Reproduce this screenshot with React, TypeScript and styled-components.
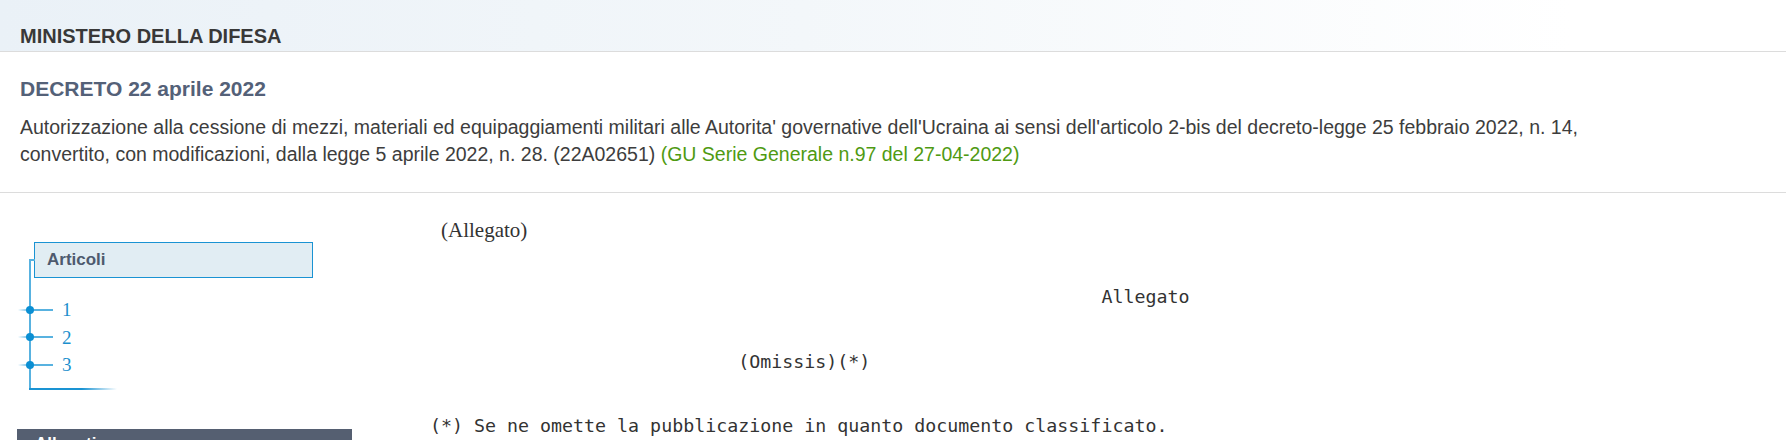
import React from 'react';
import styled, { createGlobalStyle } from 'styled-components';

const GlobalStyle = createGlobalStyle`
  html, body {
    margin: 0;
    padding: 0;
    background: #fff;
  }
  body {
    font-family: "Liberation Sans", Arial, sans-serif;
    color: #333;
  }
`;

const articoli = ['1', '2', '3'];

const pubblicazione = [
  `${' '.repeat(61)}Allegato`,
  '',
  '',
  `${' '.repeat(28)}(Omissis)(*)`,
  '',
  '',
  '(*) Se ne omette la pubblicazione in quanto documento classificato.',
].join('\n');

function App(): JSX.Element {
  return (
    <>
      <GlobalStyle />
      <Page>
        <Emettitore>MINISTERO DELLA DIFESA</Emettitore>
        <Intestazione>
          <Titolo>DECRETO 22 aprile 2022</Titolo>
          <Descrizione>
            Autorizzazione alla cessione di mezzi, materiali ed equipaggiamenti militari alle Autorita'
            governative dell'Ucraina ai sensi dell'articolo 2-bis del decreto-legge 25 febbraio 2022, n. 14,
            convertito, con modificazioni, dalla legge 5 aprile 2022, n. 28. (22A02651){' '}
            <Gazzetta>(GU Serie Generale n.97 del 27-04-2022)</Gazzetta>
          </Descrizione>
        </Intestazione>
        <Corpo>
          <Sidebar>
            <Tree>
              <TreeHead>Articoli</TreeHead>
              <TreeItems>
                {articoli.map((n) => (
                  <TreeItem key={n}>{n}</TreeItem>
                ))}
              </TreeItems>
            </Tree>
            <Pannello>Allegati</Pannello>
          </Sidebar>
          <Testo>
            <Rubrica>(Allegato)</Rubrica>
            <Pre>{pubblicazione}</Pre>
          </Testo>
        </Corpo>
      </Page>
    </>
  );
}

const Page = styled.div`
  width: 100%;
`;

const Emettitore = styled.h1`
  margin: 0;
  padding: 24px 20px 3px;
  font-size: 20px;
  line-height: 24px;
  font-weight: bold;
  color: #383838;
  background: linear-gradient(to right, #eaf1f7 0%, #f3f7fa 45%, #ffffff 88%);
  border-bottom: 1px solid #dcdcdc;
`;

const Intestazione = styled.section`
  padding: 24px 20px 24px;
  border-bottom: 1px solid #dcdcdc;
`;

const Titolo = styled.h2`
  margin: 0;
  font-size: 21px;
  line-height: 26px;
  font-weight: bold;
  color: #546178;
`;

const Descrizione = styled.p`
  margin: 12px 0 0;
  max-width: 1610px;
  font-size: 19.5px;
  line-height: 27px;
  color: #3d3d3d;
`;

const Gazzetta = styled.span`
  color: #4f9a12;
`;

const Corpo = styled.div`
  display: flex;
  align-items: flex-start;
`;

const Sidebar = styled.aside`
  flex: 0 0 335px;
  margin-left: 17px;
  padding-top: 49px;
`;

const blu = '#1a93d3';

const Tree = styled.div`
  position: relative;
  margin-left: 12px;
  padding-bottom: 10px;

  &::before {
    content: '';
    position: absolute;
    left: 0;
    top: 17px;
    bottom: 0;
    width: 4px;
    border-top: 2px solid #58b2e0;
    border-left: 2px solid #58b2e0;
  }

  &::after {
    content: '';
    position: absolute;
    left: 0;
    bottom: -1px;
    width: 88px;
    height: 2px;
    background: linear-gradient(to right, ${blu} 0%, ${blu} 60%, rgba(26, 147, 211, 0) 100%);
  }
`;

const TreeHead = styled.div`
  box-sizing: border-box;
  width: 279px;
  height: 36px;
  margin-left: 5px;
  padding: 0 12px;
  border: 1px solid ${blu};
  background: #e1edf3;
  font-size: 17px;
  line-height: 34px;
  font-weight: bold;
  color: #4e5a6e;
`;

const TreeItems = styled.ul`
  list-style: none;
  margin: 18px 0 0;
  padding: 0;
`;

const TreeItem = styled.li`
  position: relative;
  height: 27.5px;
  padding-left: 33px;
  font-family: "Liberation Serif", "Times New Roman", serif;
  font-size: 19px;
  line-height: 27.5px;
  color: #1b8fcd;

  &::before {
    content: '';
    position: absolute;
    left: -11px;
    top: 50%;
    width: 35px;
    height: 2px;
    margin-top: -1px;
    background: linear-gradient(to right, rgba(88, 178, 224, 0) 0%, #58b2e0 35%, #58b2e0 100%);
  }

  &::after {
    content: '';
    position: absolute;
    left: -3px;
    top: 50%;
    width: 8px;
    height: 8px;
    margin-top: -4px;
    border-radius: 50%;
    background: #0b8fd3;
  }
`;

const Pannello = styled.div`
  margin-top: 40px;
  height: 40px;
  padding: 5px 18px 0;
  box-sizing: border-box;
  background: #555f71;
  color: #fff;
  font-size: 17px;
  line-height: 20px;
  font-weight: bold;
`;

const Testo = styled.main`
  flex: 1;
  margin-left: 78px;
  padding-top: 25px;
`;

const Rubrica = styled.p`
  margin: 0;
  padding-left: 11px;
  font-family: "Liberation Serif", "Times New Roman", serif;
  font-size: 21px;
  line-height: 24px;
  color: #333;
`;

const Pre = styled.pre`
  margin: 44px 0 0;
  font-family: "DejaVu Sans Mono", "Liberation Mono", monospace;
  font-size: 18.3px;
  line-height: 21.5px;
  color: #333;
`;

export default App;
